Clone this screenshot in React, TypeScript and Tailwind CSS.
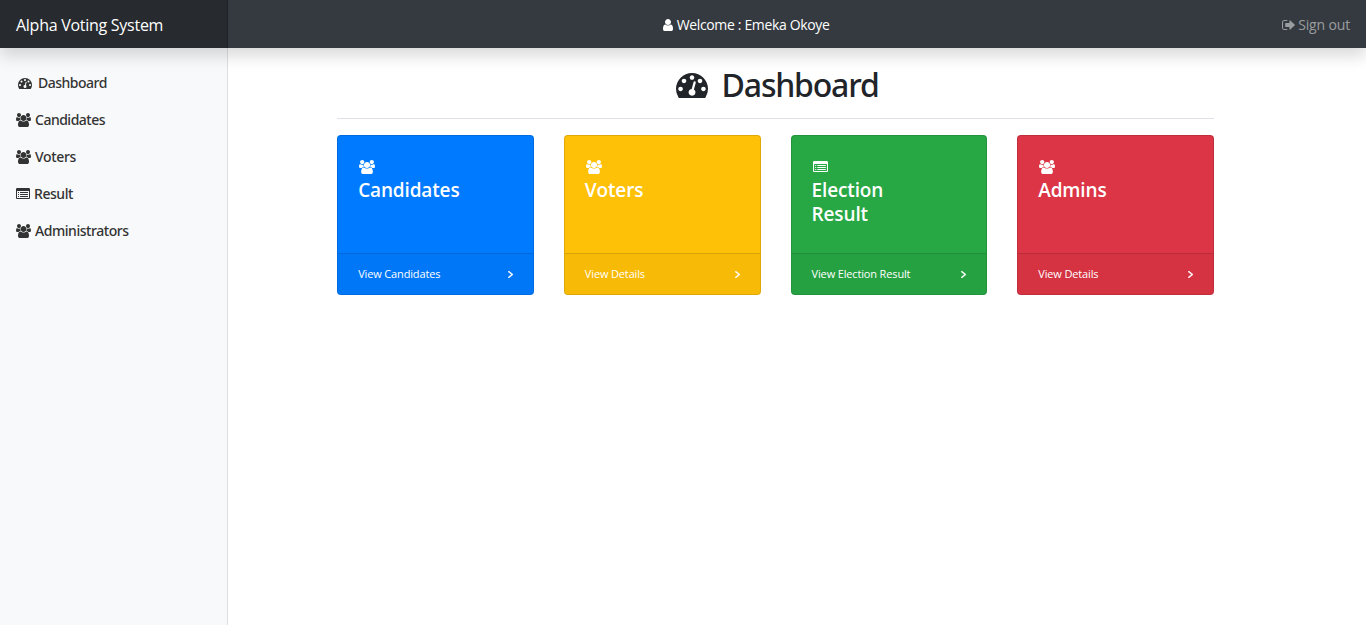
import React from "react";

const PATHS = {
  group: {
    box: "0 0 1920 1792",
    d: "M593 896q-162 5-265 128h-134q-82 0-138-40.5t-56-118.5q0-353 124-353 6 0 43.5 21t97.5 42.5 119 21.5q67 0 133-23-5 37-5 66 0 139 81 256zm1071 637q0 120-73 189.5t-194 69.5h-874q-121 0-194-69.5t-73-189.5q0-53 3.5-103.5t14-109 26.5-108.5 43-97.5 62-81 85.5-53.5 111.5-20q10 0 43 21.5t73 48 107 48 135 21.5 135-21.5 107-48 73-48 43-21.5q61 0 111.5 20t85.5 53.5 62 81 43 97.5 26.5 108.5 14 109 3.5 103.5zm-1024-1277q0 106-75 181t-181 75-181-75-75-181 75-181 181-75 181 75 75 181zm704 384q0 159-112.5 271.5t-271.5 112.5-271.5-112.5-112.5-271.5 112.5-271.5 271.5-112.5 271.5 112.5 112.5 271.5zm576 225q0 78-56 118.5t-138 40.5h-134q-103-123-265-128 81-117 81-256 0-29-5-66 66 23 133 23 59 0 119-21.5t97.5-42.5 43.5-21q124 0 124 353zm-128-609q0 106-75 181t-181 75-181-75-75-181 75-181 181-75 181 75 75 181z",
  },
  gauge: {
    box: "0 256 1792 1408",
    d: "M384 1152q0-53-37.5-90.5t-90.5-37.5-90.5 37.5-37.5 90.5 37.5 90.5 90.5 37.5 90.5-37.5 37.5-90.5zm192-448q0-53-37.5-90.5t-90.5-37.5-90.5 37.5-37.5 90.5 37.5 90.5 90.5 37.5 90.5-37.5 37.5-90.5zm428 481l101-382q6-26-7.5-48.5t-38.5-29.5-48 6.5-30 39.5l-101 382q-60 5-107 43.5t-63 98.5q-20 77 20 146t117 89 146-20 89-117q16-60-6-117t-72-91zm660-33q0-53-37.5-90.5t-90.5-37.5-90.5 37.5-37.5 90.5 37.5 90.5 90.5 37.5 90.5-37.5 37.5-90.5zm-640-640q0-53-37.5-90.5t-90.5-37.5-90.5 37.5-37.5 90.5 37.5 90.5 90.5 37.5 90.5-37.5 37.5-90.5zm448 192q0-53-37.5-90.5t-90.5-37.5-90.5 37.5-37.5 90.5 37.5 90.5 90.5 37.5 90.5-37.5 37.5-90.5zm320 448q0 261-141 483-19 29-54 29h-1402q-35 0-54-29-141-221-141-483 0-182 71-348t191-286 286-191 348-71 348 71 286 191 191 286 71 348z",
  },
  list: {
    box: "0 128 1792 1408",
    d: "M384 1184v64q0 13-9.5 22.5t-22.5 9.5h-64q-13 0-22.5-9.5t-9.5-22.5v-64q0-13 9.5-22.5t22.5-9.5h64q13 0 22.5 9.5t9.5 22.5zm0-256v64q0 13-9.5 22.5t-22.5 9.5h-64q-13 0-22.5-9.5t-9.5-22.5v-64q0-13 9.5-22.5t22.5-9.5h64q13 0 22.5 9.5t9.5 22.5zm0-256v64q0 13-9.5 22.5t-22.5 9.5h-64q-13 0-22.5-9.5t-9.5-22.5v-64q0-13 9.5-22.5t22.5-9.5h64q13 0 22.5 9.5t9.5 22.5zm1152 512v64q0 13-9.5 22.5t-22.5 9.5h-960q-13 0-22.5-9.5t-9.5-22.5v-64q0-13 9.5-22.5t22.5-9.5h960q13 0 22.5 9.5t9.5 22.5zm0-256v64q0 13-9.5 22.5t-22.5 9.5h-960q-13 0-22.5-9.5t-9.5-22.5v-64q0-13 9.5-22.5t22.5-9.5h960q13 0 22.5 9.5t9.5 22.5zm0-256v64q0 13-9.5 22.5t-22.5 9.5h-960q-13 0-22.5-9.5t-9.5-22.5v-64q0-13 9.5-22.5t22.5-9.5h960q13 0 22.5 9.5t9.5 22.5zm128 704v-832q0-13-9.5-22.5t-22.5-9.5h-1472q-13 0-22.5 9.5t-9.5 22.5v832q0 13 9.5 22.5t22.5 9.5h1472q13 0 22.5-9.5t9.5-22.5zm128-1088v1088q0 66-47 113t-113 47h-1472q-66 0-113-47t-47-113v-1088q0-66 47-113t113-47h1472q66 0 113 47t47 113z",
  },
  user: {
    box: "256 128 1280 1536",
    d: "M1536 1399q0 109-62.5 187t-150.5 78h-854q-88 0-150.5-78t-62.5-187q0-85 8.5-160.5t31.5-152 58.5-131 94-89 134.5-34.5q131 128 313 128t313-128q76 0 134.5 34.5t94 89 58.5 131 31.5 152 8.5 160.5zm-256-887q0 159-112.5 271.5t-271.5 112.5-271.5-112.5-112.5-271.5 112.5-271.5 271.5-112.5 271.5 112.5 112.5 271.5z",
  },
  signOut: {
    box: "64 256 1568 1280",
    d: "M704 1440q0 4 1 20t.5 26.5-3 23.5-10 19.5-20.5 6.5h-320q-119 0-203.5-84.5t-84.5-203.5v-704q0-119 84.5-203.5t203.5-84.5h320q13 0 22.5 9.5t9.5 22.5q0 4 1 20t.5 26.5-3 23.5-10 19.5-20.5 6.5h-320q-66 0-113 47t-47 113v704q0 66 47 113t113 47h312l11.5 1 11.5 3 8 5.5 7 9 2 13.5zm928-544q0 26-19 45l-544 544q-19 19-45 19t-45-19-19-45v-288h-448q-26 0-45-19t-19-45v-384q0-26 19-45t45-19h448v-288q0-26 19-45t45-19 45 19l544 544q19 19 19 45z",
  },
  angle: {
    box: "589 461 582 998",
    d: "M1171 960q0 13-10 23l-466 466q-10 10-23 10t-23-10l-50-50q-10-10-10-23t10-23l393-393-393-393q-10-10-10-23t10-23l50-50q10-10 23-10t23 10l466 466q10 10 10 23z",
  },
};

type IconName = keyof typeof PATHS;

function Icon({ name, className }: { name: IconName; className: string }) {
  return (
    <svg
      viewBox={PATHS[name].box}
      preserveAspectRatio="none"
      fill="currentColor"
      aria-hidden="true"
      className={`shrink-0 ${className}`}
    >
      <path d={PATHS[name].d} />
    </svg>
  );
}

const NAV: { label: string; icon: IconName; iconClass: string; textClass: string }[] = [
  { label: "Dashboard", icon: "gauge", iconClass: "ml-0.5 mr-[6px] mt-0.5 h-[11px] w-[14px]", textClass: "tracking-[-0.5px]" },
  { label: "Candidates", icon: "group", iconClass: "mr-1 h-[14px] w-[15px]", textClass: "tracking-[-0.5px]" },
  { label: "Voters", icon: "group", iconClass: "mr-1 h-[14px] w-[15px]", textClass: "tracking-[-0.35px]" },
  { label: "Result", icon: "list", iconClass: "mr-1 h-[11px] w-[14px]", textClass: "tracking-[-0.45px]" },
  { label: "Administrators", icon: "group", iconClass: "mr-1 h-[14px] w-[15px]", textClass: "tracking-[-0.45px]" },
];

const CARDS: { title: string; link: string; icon: IconName; iconClass: string; color: string }[] = [
  { title: "Candidates", link: "View Candidates", icon: "group", iconClass: "h-[14px] w-4", color: "bg-[#007bff]" },
  { title: "Voters", link: "View Details", icon: "group", iconClass: "h-[14px] w-4", color: "bg-[#ffc107]" },
  { title: "Election Result", link: "View Election Result", icon: "list", iconClass: "mb-px h-[11px] w-[15px]", color: "bg-[#28a745]" },
  { title: "Admins", link: "View Details", icon: "group", iconClass: "h-[14px] w-4", color: "bg-[#dc3545]" },
];

export default function App() {
  return (
    <div className="flex h-[625px] flex-col overflow-hidden bg-white font-['Open_Sans','Noto_Sans',sans-serif] text-[#212529]">
      <header className="relative z-10 flex h-12 shrink-0 items-center bg-[#343a40] text-white shadow-[0_8px_16px_rgba(0,0,0,0.15)]">
        <div className="flex h-12 w-1/6 items-center bg-black/25 pt-px pl-4 text-base shadow-[inset_-1px_0_0_rgba(0,0,0,0.25)]">
          <span className="tracking-[-0.27px]">Alpha Voting System</span>
        </div>
        <div className="flex flex-1 items-center pt-0.5 pl-[435px] text-sm">
          <Icon name="user" className="mr-1 h-3 w-[10px]" />
          <span className="tracking-[-0.35px]">Welcome : Emeka Okoye</span>
        </div>
        <a className="flex items-center pt-0.5 pr-4 text-sm text-white/50">
          <Icon name="signOut" className="mr-[3px] h-[10px] w-[13px]" />
          <span className="tracking-[-0.15px]">Sign out</span>
        </a>
      </header>
      <div className="flex flex-1">
        <nav className="flex w-1/6 flex-col bg-[#f8f9fa] pt-4 shadow-[inset_-1px_0_0_rgba(0,0,0,0.1)]">
          {NAV.map((item) => (
            <a
              key={item.label}
              className="flex h-[37px] items-center pl-4 font-['Noto_Sans',sans-serif] text-sm font-medium text-[#333]"
            >
              <Icon name={item.icon} className={item.iconClass} />
              <span className={item.textClass}>{item.label}</span>
            </a>
          ))}
        </nav>
        <main className="flex flex-1 flex-col pl-[109.5px] pr-[152px]">
          <div className="mb-4 flex h-[71px] items-start justify-center border-b border-[#dee2e6] pt-4">
            <h2 className="flex items-center pl-[3px] font-['Noto_Sans',sans-serif] text-[32px] leading-[42px] font-medium">
              <Icon name="gauge" className="mr-[14px] h-[25px] w-8" />
              <span className="tracking-[-1.2px]">Dashboard</span>
            </h2>
          </div>
          <div className="grid grid-cols-4 gap-[30px]">
            {CARDS.map((card) => (
              <section
                key={card.title}
                className={`flex h-40 flex-col overflow-hidden rounded border border-black/[0.125] bg-clip-border text-white ${card.color}`}
              >
                <div className="flex-1 px-5 pt-[19px]">
                  <div className="flex h-[23px] items-center pt-px pl-px">
                    <Icon name={card.icon} className={card.iconClass} />
                  </div>
                  <h3 className="w-28 text-[19px] leading-6 font-semibold tracking-[-0.15px]">
                    {card.title}
                  </h3>
                </div>
                <div className="flex h-[41px] items-center justify-between border-t border-black/[0.125] bg-black/[0.03] px-5 text-[11px]">
                  <span className="tracking-[-0.15px]">{card.link}</span>
                  <Icon name="angle" className="h-[7px] w-[5px] stroke-current stroke-[60px]" />
                </div>
              </section>
            ))}
          </div>
        </main>
      </div>
    </div>
  );
}
